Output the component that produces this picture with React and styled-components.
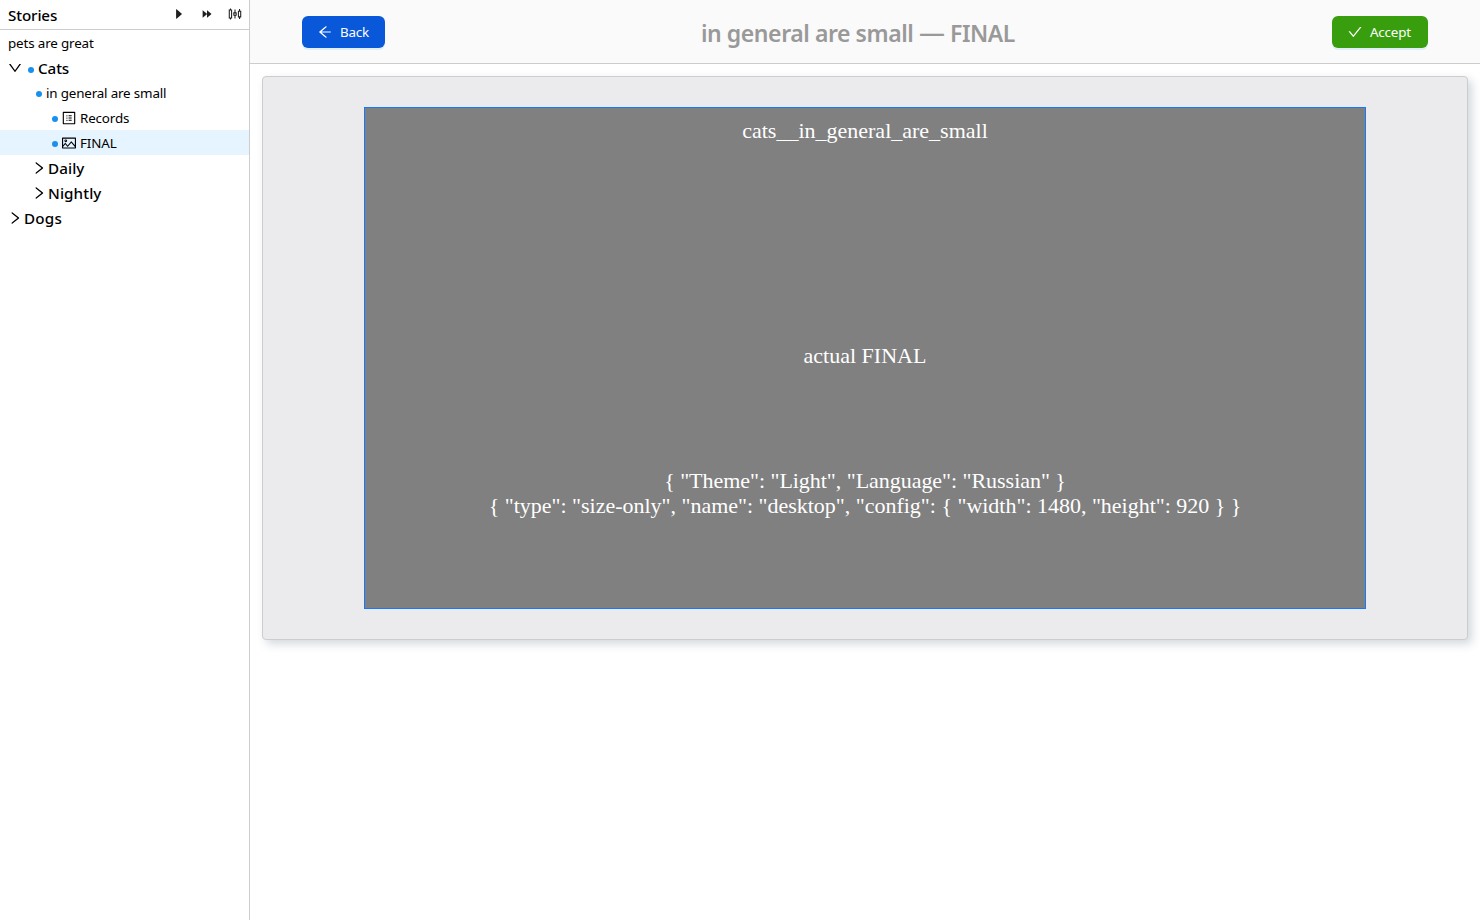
import React from "react";
import styled, { createGlobalStyle } from "styled-components";
import {
  AiFillCaretRight,
  AiFillForward,
  AiOutlineSliders,
  AiOutlineDown,
  AiOutlineRight,
  AiOutlineProfile,
  AiOutlinePicture,
  AiOutlineArrowLeft,
  AiOutlineCheck,
} from "react-icons/ai";

const GlobalStyle = createGlobalStyle`
  * { box-sizing: border-box; }
  body {
    margin: 0;
    background: #fff;
    color: #000;
    font-family: "Segoe UI", "Noto Sans", sans-serif;
  }
`;

const Layout = styled.div`
  display: flex;
  height: 920px;
  overflow: hidden;
`;

const Sidebar = styled.aside`
  width: 250px;
  flex: none;
  border-right: 1px solid #cdcdcd;
`;

const SidebarHeader = styled.div`
  display: flex;
  align-items: center;
  height: 30px;
  padding: 0 7px 0 8px;
  border-bottom: 1px solid #cdcdcd;
`;

const Text = styled.span`
  padding-top: 1px;
  font-size: ${(p) => (p.$strong ? 15.2 : 13.4)}px;
  font-weight: ${(p) => (p.$strong ? 500 : 400)};
  letter-spacing: ${(p) => p.$spacing || 0}px;
  line-height: 25px;
  white-space: pre;
`;

const Icon = styled.span`
  display: flex;
  flex: none;
  align-items: center;
  justify-content: center;
  width: 14px;
  height: 14px;
  margin-right: ${(p) => p.$gap || 0}px;

  svg {
    flex: none;
    width: ${(p) => p.$size || 16}px;
    height: ${(p) => p.$size || 16}px;
  }
`;

const Actions = styled.div`
  display: flex;
  gap: 14px;
  margin: 0 0 1px auto;
  color: #1f1f1f;
`;

const Row = styled.div`
  display: flex;
  align-items: center;
  height: 25px;
  padding-left: ${(p) => p.$indent}px;
  background: ${(p) => (p.$active ? "#e6f4ff" : "transparent")};
`;

const Dot = styled.span`
  width: 6px;
  height: 6px;
  margin: ${(p) => p.$drop || 3}px 4px 0 0;
  border-radius: 50%;
  background: #1890f0;
`;

const Main = styled.main`
  flex: 1;
  min-width: 0;
`;

const Toolbar = styled.header`
  display: flex;
  align-items: flex-start;
  justify-content: space-between;
  height: 64px;
  padding: 16px 52px 0;
  background: #fafafa;
  border-bottom: 1px solid #cdcdcd;
`;

const Button = styled.button`
  display: flex;
  align-items: center;
  gap: 8px;
  width: ${(p) => p.$width}px;
  height: 32px;
  padding: 0 0 0 16px;
  border: 0;
  border-radius: 6px;
  background: ${(p) => p.$color};
  box-shadow: 0 2px 0 rgba(5, 145, 255, 0.1);
  color: #fff;
  font-family: inherit;
  font-size: 13.4px;
  letter-spacing: -0.2px;
`;

const Title = styled.h1`
  margin: 0;
  padding-right: 1px;
  font-size: 23px;
  font-weight: 600;
  line-height: 34px;
  letter-spacing: -0.43px;
  color: #999;
  white-space: nowrap;
`;

const Dash = styled.span`
  font-size: 26px;
  font-weight: 500;
  line-height: 0;
`;

const Card = styled.section`
  display: flex;
  justify-content: center;
  height: 564px;
  margin: 12px 12px 0;
  padding-top: 30px;
  border: 1px solid #cdcdcd;
  border-radius: 4px;
  background: #ebebed;
  box-shadow: 4px 4px 10px rgba(34, 60, 80, 0.2);
`;

const Shot = styled.div`
  width: 1002px;
  height: 502px;
  padding-top: 10px;
  border: 1px solid #1677ff;
  background: #808080;
  color: #fff;
  font: 22px/25px "Liberation Serif", serif;
  text-align: center;
`;

const ShotLine = styled.div`
  margin-top: ${(p) => p.$skip || 0}px;
  letter-spacing: ${(p) => p.$spacing || 0}px;
  white-space: nowrap;
`;

export default function App() {
  return (
    <>
      <GlobalStyle />
      <Layout>
        <Sidebar>
          <SidebarHeader>
            <Text $strong $spacing={-0.12}>Stories</Text>
            <Actions>
              <Icon $size={14}><AiFillCaretRight /></Icon>
              <Icon $size={14}><AiFillForward /></Icon>
              <Icon><AiOutlineSliders /></Icon>
            </Actions>
          </SidebarHeader>
          <Row $indent={8}><Text $spacing={-0.15}>pets are great</Text></Row>
          <Row $indent={8}>
            <Icon $gap={6}><AiOutlineDown /></Icon>
            <Dot $drop={5} />
            <Text $strong $spacing={-0.1}>Cats</Text>
          </Row>
          <Row $indent={36}><Dot /><Text $spacing={-0.17}>in general are small</Text></Row>
          <Row $indent={52}>
            <Dot />
            <Icon $gap={4}><AiOutlineProfile /></Icon>
            <Text $spacing={-0.15}>Records</Text>
          </Row>
          <Row $indent={52} $active>
            <Dot />
            <Icon $gap={4}><AiOutlinePicture /></Icon>
            <Text $spacing={-0.1}>FINAL</Text>
          </Row>
          <Row $indent={31.5}>
            <Icon $gap={2.5}><AiOutlineRight /></Icon>
            <Text $strong $spacing={0.08}>Daily</Text>
          </Row>
          <Row $indent={31.5}>
            <Icon $gap={2.5}><AiOutlineRight /></Icon>
            <Text $strong $spacing={0.1}>Nightly</Text>
          </Row>
          <Row $indent={7.5}>
            <Icon $gap={2.5}><AiOutlineRight /></Icon>
            <Text $strong $spacing={0.2}>Dogs</Text>
          </Row>
        </Sidebar>
        <Main>
          <Toolbar>
            <Button $width={83} $color="#0958d9">
              <Icon><AiOutlineArrowLeft /></Icon>
              Back
            </Button>
            <Title>in general are small <Dash>—</Dash> FINAL</Title>
            <Button $width={96} $color="#389e0d">
              <Icon><AiOutlineCheck /></Icon>
              Accept
            </Button>
          </Toolbar>
          <Card>
            <Shot>
              <ShotLine>cats__in_general_are_small</ShotLine>
              <ShotLine $skip={200}>actual FINAL</ShotLine>
              <ShotLine $skip={100} $spacing={-0.04}>{'{ "Theme": "Light", "Language": "Russian" }'}</ShotLine>
              <ShotLine $spacing={-0.015}>
                {'{ "type": "size-only", "name": "desktop", "config": { "width": 1480, "height": 920 } }'}
              </ShotLine>
            </Shot>
          </Card>
        </Main>
      </Layout>
    </>
  );
}
